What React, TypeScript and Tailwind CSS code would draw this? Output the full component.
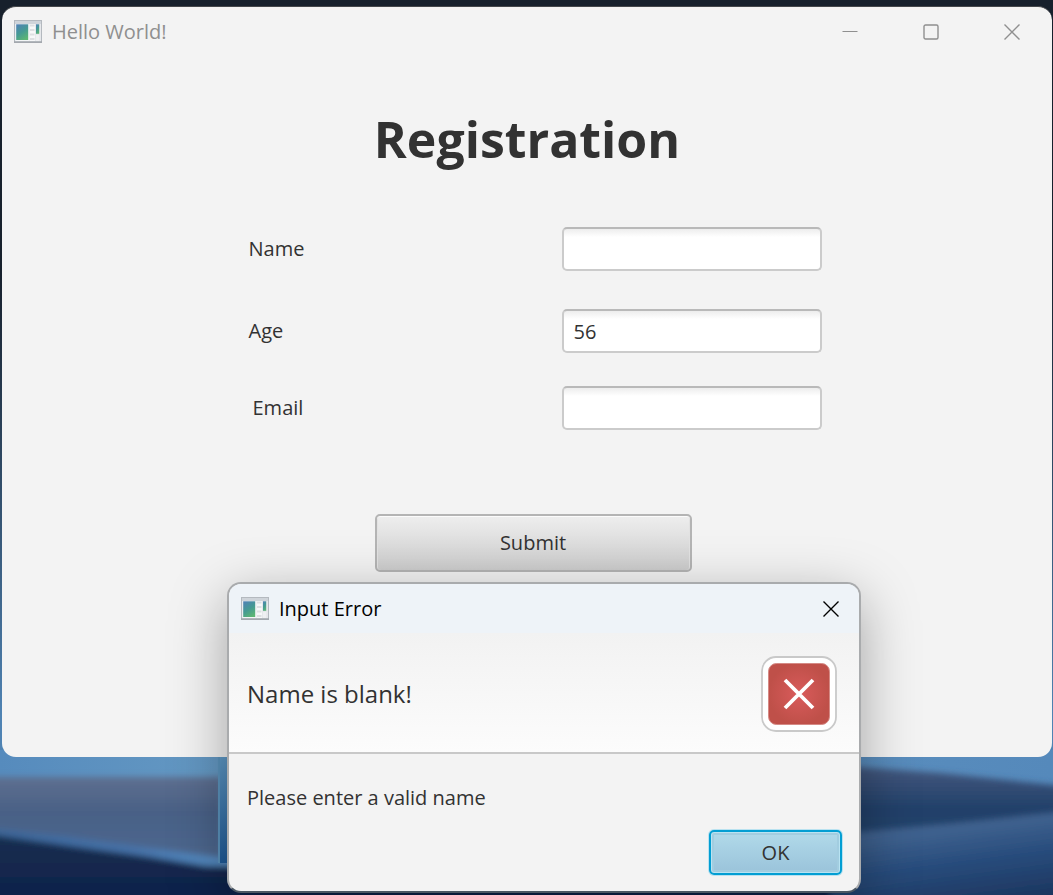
import { useState } from "react";

function Wallpaper() {
  return (
    <svg
      className="absolute inset-x-0 bottom-0 h-[145px] w-full"
      viewBox="0 0 1053 145"
      preserveAspectRatio="none"
      aria-hidden="true"
    >
      <defs>
        <linearGradient id="sky" x1="0" y1="0" x2="1" y2="0">
          <stop offset="0" stopColor="#568bbd" />
          <stop offset="0.22" stopColor="#6599c3" />
          <stop offset="1" stopColor="#5589bb" />
        </linearGradient>
        <linearGradient id="haze" x1="0" y1="0" x2="0" y2="1">
          <stop offset="0" stopColor="#5e6f90" />
          <stop offset="0.35" stopColor="#4a6186" />
          <stop offset="0.65" stopColor="#4b658c" />
          <stop offset="1" stopColor="#55698f" />
        </linearGradient>
        <linearGradient id="deep" x1="0" y1="0" x2="0" y2="1">
          <stop offset="0" stopColor="#1a2f50" />
          <stop offset="0.5" stopColor="#10244c" />
          <stop offset="1" stopColor="#10244c" />
        </linearGradient>
        <linearGradient id="streak" x1="0" y1="0" x2="1" y2="0">
          <stop offset="0" stopColor="#3b6598" />
          <stop offset="0.6" stopColor="#4672a8" />
          <stop offset="1" stopColor="#5a94cb" />
        </linearGradient>
        <linearGradient id="pillar" x1="0" y1="0" x2="0" y2="1">
          <stop offset="0" stopColor="#609ac7" />
          <stop offset="1" stopColor="#1f5b99" />
        </linearGradient>
        <linearGradient id="ridge" x1="0" y1="0" x2="0" y2="1">
          <stop offset="0" stopColor="#46597f" />
          <stop offset="0.45" stopColor="#22416a" />
          <stop offset="1" stopColor="#24456f" />
        </linearGradient>
        <linearGradient id="slope" x1="0" y1="0" x2="0.25" y2="1">
          <stop offset="0" stopColor="#426491" />
          <stop offset="0.25" stopColor="#3f628f" />
          <stop offset="0.5" stopColor="#284c7c" />
          <stop offset="1" stopColor="#162a50" />
        </linearGradient>
        <filter id="soft" x="-10%" y="-20%" width="120%" height="140%">
          <feGaussianBlur stdDeviation="3" />
        </filter>
      </defs>
      <rect width="1053" height="145" fill="url(#sky)" />
      <g filter="url(#soft)">
        <path d="M-20 27 L222 27 L222 125 L-20 90Z" fill="url(#haze)" />
        <path d="M-20 77 L70 87 L150 98 L240 110 L240 122 L-20 90Z" fill="url(#streak)" />
        <path d="M-20 83 L70 96 L150 107 L205 116 L300 118 L860 125 L860 190 L-20 190Z" fill="url(#deep)" />
        <path d="M830 15 L940 23 L1080 38 L1080 90 L830 110Z" fill="url(#ridge)" />
        <path d="M830 85 L950 74 L1080 60 L1080 190 L830 190Z" fill="url(#slope)" />
      </g>
      <rect x="218" y="5" width="12" height="108" fill="url(#pillar)" />
      <rect x="218" y="5" width="2" height="108" fill="#5b93bd" />
    </svg>
  );
}

function AppIcon({ id }: { id: string }) {
  return (
    <svg width="28" height="24" viewBox="0 0 28 24" aria-hidden="true">
      <defs>
        <linearGradient id={id} x1="0.2" y1="0" x2="0.7" y2="1">
          <stop offset="0" stopColor="#4f83b3" />
          <stop offset="0.5" stopColor="#459a93" />
          <stop offset="1" stopColor="#5db673" />
        </linearGradient>
      </defs>
      <rect x="0.5" y="0.5" width="27" height="21.5" fill="#e6e8eb" stroke="#b4b9bf" />
      <rect x="1" y="1" width="26" height="3" fill="#cfd4da" />
      <rect x="0" y="21.5" width="28" height="1.3" fill="#989da3" />
      <rect x="1.5" y="4" width="13.5" height="17" fill="#f4f6f7" />
      <rect x="2.2" y="4.3" width="12" height="15.7" fill={`url(#${id})`} />
      <rect x="15.5" y="4" width="5.5" height="17" fill="#f7f8f9" />
      <path d="M16 5.5h4.5M16 10h4.5M16 14.5h4.5M16 19h4.5" stroke="#dddfe2" strokeWidth="2" />
      <rect x="22" y="4.3" width="3.2" height="9.5" fill={`url(#${id})`} />
      <rect x="22" y="15" width="3.2" height="6" fill="#eff0f2" />
    </svg>
  );
}

function CloseGlyph() {
  return (
    <svg width="16" height="16" viewBox="0 0 16 16" fill="none" stroke="currentColor" strokeWidth="1.4" aria-hidden="true">
      <path d="M0.5 0.5 15.5 15.5M15.5 0.5 0.5 15.5" />
    </svg>
  );
}

const fieldClass =
  "h-11 w-[260px] rounded-[5px] border-2 border-[#cbcbcb] border-t-[#b9b9b9] bg-white bg-linear-to-b from-[#ededed] via-white via-20% to-white px-2.5 text-xl text-[#323232] outline-none";

export default function App() {
  const [name, setName] = useState("");
  const [age, setAge] = useState("56");
  const [email, setEmail] = useState("");
  const [open, setOpen] = useState(true);

  return (
    <div className="relative min-h-screen overflow-hidden bg-linear-to-b from-[#17202c] from-30% to-[#4f83b3] to-80% pt-1.5 pr-px pl-0.5 font-['Open_Sans','Noto_Sans',sans-serif] text-xl text-[#323232]">
      <Wallpaper />

      <main className="relative rounded-[14px] border-t border-[#44474b] bg-[#f3f3f3] pb-[185px]">
        <header className="flex h-[50px] items-center justify-between pr-8 pl-3 text-[#8f8f8f]">
          <div className="flex items-center gap-2.5">
            <AppIcon id="main-icon" />
            <span>Hello World!</span>
          </div>
          <div className="flex items-center gap-[65px]">
            <button type="button" aria-label="Minimize">
              <svg width="16" height="16" viewBox="0 0 16 16" aria-hidden="true">
                <path d="M0.5 7.5h15" stroke="currentColor" />
              </svg>
            </button>
            <button type="button" aria-label="Maximize">
              <svg width="16" height="16" viewBox="0 0 16 16" aria-hidden="true">
                <rect x="1" y="1" width="14" height="14" rx="1.5" fill="none" stroke="currentColor" strokeWidth="1.4" />
              </svg>
            </button>
            <button type="button" aria-label="Close">
              <CloseGlyph />
            </button>
          </div>
        </header>

        <h1 className="pt-[42px] text-center text-[50px] leading-[80px] font-bold">Registration</h1>

        <form
          className="pt-12 pl-4"
          onSubmit={(e) => {
            e.preventDefault();
            setOpen(true);
          }}
        >
          <div className="mx-auto flex max-w-[573px] flex-col">
            <div className="flex items-center justify-between">
              <label htmlFor="name">Name</label>
              <input id="name" className={fieldClass} value={name} onChange={(e) => setName(e.target.value)} />
            </div>
            <div className="mt-[38px] flex items-center justify-between">
              <label htmlFor="age">Age</label>
              <input id="age" className={fieldClass} value={age} onChange={(e) => setAge(e.target.value)} />
            </div>
            <div className="mt-[33px] flex items-center justify-between">
              <label htmlFor="email" className="pl-1">Email</label>
              <input id="email" className={fieldClass} value={email} onChange={(e) => setEmail(e.target.value)} />
            </div>
            <div className="flex justify-center pt-[84px] pr-1">
              <button
                type="submit"
                className="h-[58px] w-[317px] rounded-[5px] border-2 border-[#b4b4b4] bg-linear-to-b from-[#eeeeee] to-[#cdcdcd] shadow-[inset_0_1px_0_#fbfbfb,inset_1px_0_0_#e2e2e2,inset_-1px_0_0_#e2e2e2]"
              >
                Submit
              </button>
            </div>
          </div>
        </form>
      </main>

      {open && (
        <section
          role="dialog"
          aria-labelledby="dialog-title"
          className="absolute top-[582px] left-[227px] w-[634px] overflow-hidden rounded-[14px] border-2 border-[#a9abad] border-b-[#4b5763] bg-[#f3f3f3] shadow-[0_16px_56px_rgba(0,0,0,0.34)]"
        >
          <header className="flex h-[49px] items-center justify-between bg-[#eef3f8] pr-5 pl-3 text-black">
            <div className="flex items-center gap-2.5">
              <AppIcon id="dialog-icon" />
              <h2 id="dialog-title">Input Error</h2>
            </div>
            <button type="button" aria-label="Close dialog" onClick={() => setOpen(false)}>
              <CloseGlyph />
            </button>
          </header>

          <div className="flex h-[121px] items-center justify-between border-b-2 border-[#c8c8c8] bg-linear-to-b from-[#f2f2f2] to-[#fcfcfc] pt-0.5 pr-[22px] pl-[18px]">
            <p className="text-2xl">Name is blank!</p>
            <svg width="76" height="76" viewBox="0 0 76 76" aria-hidden="true">
              <defs>
                <radialGradient id="error-fill">
                  <stop offset="0" stopColor="#d95b5b" />
                  <stop offset="1" stopColor="#bf5049" />
                </radialGradient>
              </defs>
              <rect x="1" y="1" width="74" height="74" rx="14" fill="#ffffff" stroke="#c9c9c9" strokeWidth="1.8" />
              <rect x="7.5" y="7.5" width="61" height="61" rx="8" fill="url(#error-fill)" stroke="#d58a85" />
              <path d="M24 24 52 52M52 24 24 52" stroke="#ffffff" strokeWidth="3.8" />
            </svg>
          </div>

          <p className="pt-7 pl-[18px] leading-8">Please enter a valid name</p>
          <div className="flex justify-end pt-4 pr-[17px] pb-4">
            <button
              type="button"
              onClick={() => setOpen(false)}
              className="h-[45px] w-[133px] rounded-[5px] border-2 border-[#039ed3] bg-linear-to-b from-[#b1daea] to-[#9ac3da] shadow-[0_0_0_1px_#b9e2f0,inset_0_0_0_1px_#b9e3f2,inset_0_0_0_3px_#a2cde0]"
            >
              OK
            </button>
          </div>
        </section>
      )}
    </div>
  );
}
